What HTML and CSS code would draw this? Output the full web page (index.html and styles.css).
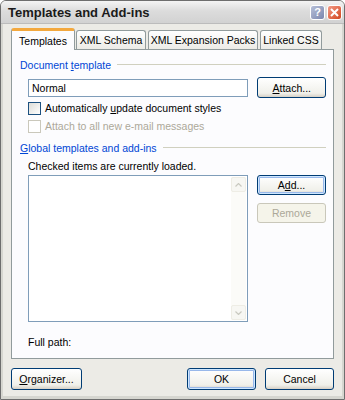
FILE: index.html
```html
<!DOCTYPE html>
<html lang="en">
<head>
    <meta charset="UTF-8">
    <title>Templates and Add-ins</title>
    <link rel="stylesheet" href="styles.css">
</head>
<body>
    <div class="window">
        <!-- Title bar -->
        <div class="titlebar">
            <span class="title">Templates and Add-ins</span>
            <div class="caption-buttons">
                <span class="cap-btn help">?</span>
                <span class="cap-btn close">
                    <svg width="9" height="9" viewBox="0 0 9 9"><path d="M1 1 L8 8 M8 1 L1 8" stroke="#fff" stroke-width="2"/></svg>
                </span>
            </div>
        </div>

        <div class="client">
            <!-- Tabs -->
            <div class="tabs">
                <div class="tab active t1">Templates</div>
                <div class="tab t2">XML Schema</div>
                <div class="tab t3">XML Expansion Packs</div>
                <div class="tab t4">Linked CSS</div>
            </div>

            <div class="panel">
                <div class="group-title"><span>Document <u>t</u>emplate</span></div>
                <div class="template-row">
                    <div class="textbox">Normal</div>
                    <button class="btn"><u>A</u>ttach...</button>
                </div>
                <label class="check"><span class="box"></span><span>Automatically <u>u</u>pdate document styles</span></label>
                <label class="check disabled"><span class="box"></span><span>Attach to all new e-mail messages</span></label>

                <div class="group-title second"><span><u>G</u>lobal templates and add-ins</span></div>
                <p class="note">Checked items are currently loaded.</p>
                <div class="list-row">
                    <div class="listbox">
                        <div class="scrollbar">
                            <span class="arrow">
                                <svg width="7" height="4" viewBox="0 0 7 4"><path d="M0.5 3.5 L3.5 0.5 L6.5 3.5" fill="none" stroke="#c9c9c0" stroke-width="1.2"/></svg>
                            </span>
                            <span class="arrow">
                                <svg width="7" height="4" viewBox="0 0 7 4"><path d="M0.5 0.5 L3.5 3.5 L6.5 0.5" fill="none" stroke="#c9c9c0" stroke-width="1.2"/></svg>
                            </span>
                        </div>
                    </div>
                    <div class="side-buttons">
                        <button class="btn focus">A<u>d</u>d...</button>
                        <button class="btn" disabled>Remove</button>
                    </div>
                </div>
                <p class="path">Full path:</p>
            </div>

            <div class="footer">
                <button class="btn wide"><u>O</u>rganizer...</button>
                <div class="footer-right">
                    <button class="btn focus">OK</button>
                    <button class="btn">Cancel</button>
                </div>
            </div>
        </div>
    </div>
</body>
</html>
```

FILE: styles.css
```css
/* Global */
body {
    margin: 0;
    padding: 0;
    font-family: 'Liberation Sans', Arial, sans-serif;
    font-size: 10.5px;
    color: #000;
    background: #fff;
}

.window {
    width: 345px;
    height: 400px;
    box-sizing: border-box;
    border: 1px solid #6e6e6e;
    border-radius: 6px 6px 0 0;
    background: #ecebe6;
    display: flex;
    flex-direction: column;
    overflow: hidden;
}

/* Title bar */
.titlebar {
    height: 22px;
    display: flex;
    align-items: center;
    justify-content: space-between;
    padding: 0 2px 0 7px;
    background: linear-gradient(#f4f4f4, #dcdcdc 45%, #d2d2d2);
    border-bottom: 1px solid #bcbcbc;
}

.title {
    font-weight: bold;
    font-size: 13px;
    color: #1a1a1a;
}

.caption-buttons {
    display: flex;
    gap: 2px;
}

.cap-btn {
    width: 15px;
    height: 15px;
    box-sizing: border-box;
    border: 1px solid #fff;
    border-radius: 3px;
    display: flex;
    align-items: center;
    justify-content: center;
    font-weight: bold;
    font-size: 11px;
    color: #fff;
}

.cap-btn.help {
    background: linear-gradient(135deg, #b8c0d8, #7a86ae);
}

.cap-btn.close {
    background: linear-gradient(135deg, #f39a86, #d2461f);
}

/* Client area */
.client {
    flex: 1;
    display: flex;
    flex-direction: column;
    padding: 4px 8px 0 8px;
    border-left: 2px solid #d6d6d0;
    border-right: 2px solid #d6d6d0;
    border-bottom: 3px solid #d6d6d0;
}

/* Tabs */
.tabs {
    display: flex;
    height: 21px;
    align-items: flex-end;
    position: relative;
    z-index: 1;
}

.tab {
    height: 19px;
    box-sizing: border-box;
    display: flex;
    align-items: center;
    justify-content: center;
    white-space: nowrap;
    border: 1px solid #919b9c;
    border-bottom: none;
    border-radius: 3px 3px 0 0;
    background: linear-gradient(#ffffff, #ecebe6);
    color: #000;
    margin-right: 1px;
}

.tab.active {
    height: 22px;
    margin-bottom: -1px;
    background: #fcfcfe;
    border-top: 3px solid #f3a83e;
}

.t1 { width: 64px; }
.t2 { width: 70px; margin-right: 2px; }
.t3 { width: 110px; margin-right: 2px; }
.t4 { width: 62px; }

/* Tab panel */
.panel {
    height: 310px;
    box-sizing: border-box;
    border: 1px solid #919b9c;
    background: #fcfcfe;
    padding: 8px 7px 0 8px;
    display: flex;
    flex-direction: column;
}

.group-title {
    display: flex;
    align-items: center;
    height: 13px;
    color: #0046d5;
}

.group-title::after {
    content: "";
    flex: 1;
    height: 1px;
    margin-left: 6px;
    background: #d0d0bf;
}

.group-title.second {
    margin-top: 8px;
}

.template-row {
    display: flex;
    align-items: center;
    margin: 6px 0 0 8px;
    gap: 9px;
}

.textbox {
    width: 222px;
    height: 18px;
    box-sizing: border-box;
    border: 1px solid #7f9db9;
    background: #fff;
    padding: 1px 3px;
    line-height: 14px;
}

.btn {
    width: 69px;
    height: 21px;
    box-sizing: border-box;
    font-family: inherit;
    font-size: 10.5px;
    color: #000;
    border: 1px solid #003c74;
    border-radius: 3px;
    background: linear-gradient(#ffffff, #f0f0ea 80%, #d6d0c5);
    padding: 0;
}

.btn.focus {
    box-shadow: inset 0 0 0 1px #cee7ff, inset 0 0 0 2px #98b8ea;
}

.btn:disabled {
    color: #aca899;
    border-color: #c9c7ba;
    background: #f5f4ea;
}

.check {
    display: flex;
    align-items: center;
    margin: 3px 0 0 8px;
    height: 14px;
}

.check + .check {
    margin-top: 4px;
}

.box {
    width: 13px;
    height: 13px;
    box-sizing: border-box;
    border: 1px solid #1c5180;
    background: linear-gradient(135deg, #dcdcd7, #ffffff);
    margin-right: 4px;
}

.check.disabled {
    color: #aca899;
}

.check.disabled .box {
    border-color: #cac8bb;
    background: #fff;
}

.note {
    margin: 6px 0 0 8px;
    height: 13px;
}

.list-row {
    display: flex;
    margin: 2px 0 0 8px;
    gap: 9px;
}

.listbox {
    width: 222px;
    height: 147px;
    box-sizing: border-box;
    border: 1px solid #7f9db9;
    background: #fff;
    display: flex;
    justify-content: flex-end;
    padding: 1px;
}

.scrollbar {
    width: 15px;
    background: #fbfbf8;
    display: flex;
    flex-direction: column;
    justify-content: space-between;
}

.arrow {
    height: 15px;
    box-sizing: border-box;
    border: 1px solid #eeede5;
    border-radius: 2px;
    background: #f7f7f3;
    display: flex;
    align-items: center;
    justify-content: center;
}

.side-buttons {
    display: flex;
    flex-direction: column;
    gap: 8px;
}

.side-buttons .btn {
    height: 20px;
}

.path {
    margin: 14px 0 0 8px;
}

/* Footer */
.footer {
    display: flex;
    justify-content: space-between;
    margin-top: 9px;
}

.footer .btn {
    height: 22px;
}

.btn.wide {
    width: 71px;
}

.footer-right {
    display: flex;
    gap: 9px;
}
```
